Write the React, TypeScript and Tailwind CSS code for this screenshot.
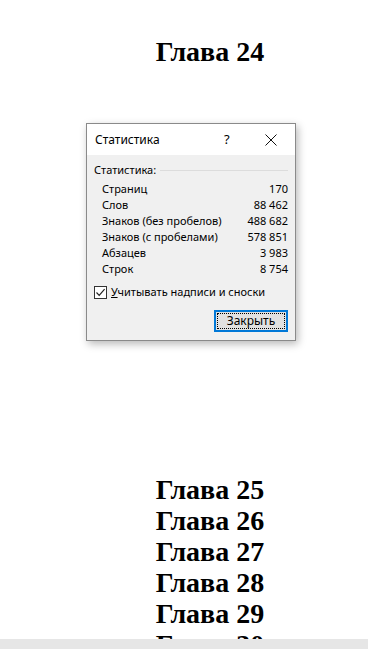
export default function App() {
  const rows = [
    ["Страниц", "170"],
    ["Слов", "88 462"],
    ["Знаков (без пробелов)", "488 682"],
    ["Знаков (с пробелами)", "578 851"],
    ["Абзацев", "3 983"],
    ["Строк", "8 754"],
  ];
  const chapters = [25, 26, 27, 28, 29, 30];

  return (
    <div className="relative h-[649px] w-[368px] overflow-hidden bg-white">
      <div className="pt-[36px] pl-[52px] text-center font-['Liberation_Serif',serif] text-[28px] font-bold leading-[31px] text-black">
        Глава 24
      </div>

      <div className="mt-[56px] ml-[86px] w-[210px] border border-[#8a8a8a] bg-[#f0f0f0] shadow-[2px_3px_8px_rgba(0,0,0,0.28)] font-['Noto_Sans',sans-serif] text-[11px] text-black">
        <div className="flex h-[31px] items-center bg-white pl-[8px]">
          <span className="flex-1 text-[12px]">Статистика</span>
          <span className="w-[41px] text-[13px]">?</span>
          <svg width="12" height="12" viewBox="0 0 12 12" className="mr-[18px]">
            <path d="M0.5 0.5 L11.5 11.5 M11.5 0.5 L0.5 11.5" stroke="#111" strokeWidth="1" />
          </svg>
        </div>

        <div className="px-[7px] pt-[7px] pb-[8px]">
          <div className="flex items-center gap-[4px] leading-[16px]">
            <span>Статистика:</span>
            <div className="h-px flex-1 bg-[#dcdcdc]" />
          </div>
          <div className="mt-[3px] pl-[8px]">
            {rows.map(([k, v]) => (
              <div key={k} className="flex justify-between leading-[16px]">
                <span>{k}</span>
                <span>{v}</span>
              </div>
            ))}
          </div>

          <div className="mt-[7px] flex items-center gap-[4px]">
            <div className="flex h-[13px] w-[13px] items-center justify-center border border-[#333] bg-white">
              <svg width="11" height="11" viewBox="0 0 11 11">
                <path d="M1.5 5.5 L4.2 8.3 L9.6 2.2" fill="none" stroke="#222" strokeWidth="1.2" />
              </svg>
            </div>
            <span className="leading-[16px]">
              <span className="underline">У</span>читывать надписи и сноски
            </span>
          </div>

          <div className="mt-[10px] flex justify-end">
            <div className="flex h-[22px] w-[74px] items-center justify-center border-2 border-[#0078d7] bg-[#e1e1e1] p-[1px]">
              <div className="flex h-full w-full items-center justify-center border border-dotted border-black text-[12px]">
                Закрыть
              </div>
            </div>
          </div>
        </div>
      </div>

      <div className="mt-[133px] pl-[52px] text-center font-['Liberation_Serif',serif] text-[28px] font-bold leading-[31px] text-black">
        {chapters.map((c) => (
          <div key={c}>Глава {c}</div>
        ))}
      </div>

      <div className="absolute bottom-0 left-0 h-[10px] w-full bg-[#e6e6e6]" />
    </div>
  );
}
